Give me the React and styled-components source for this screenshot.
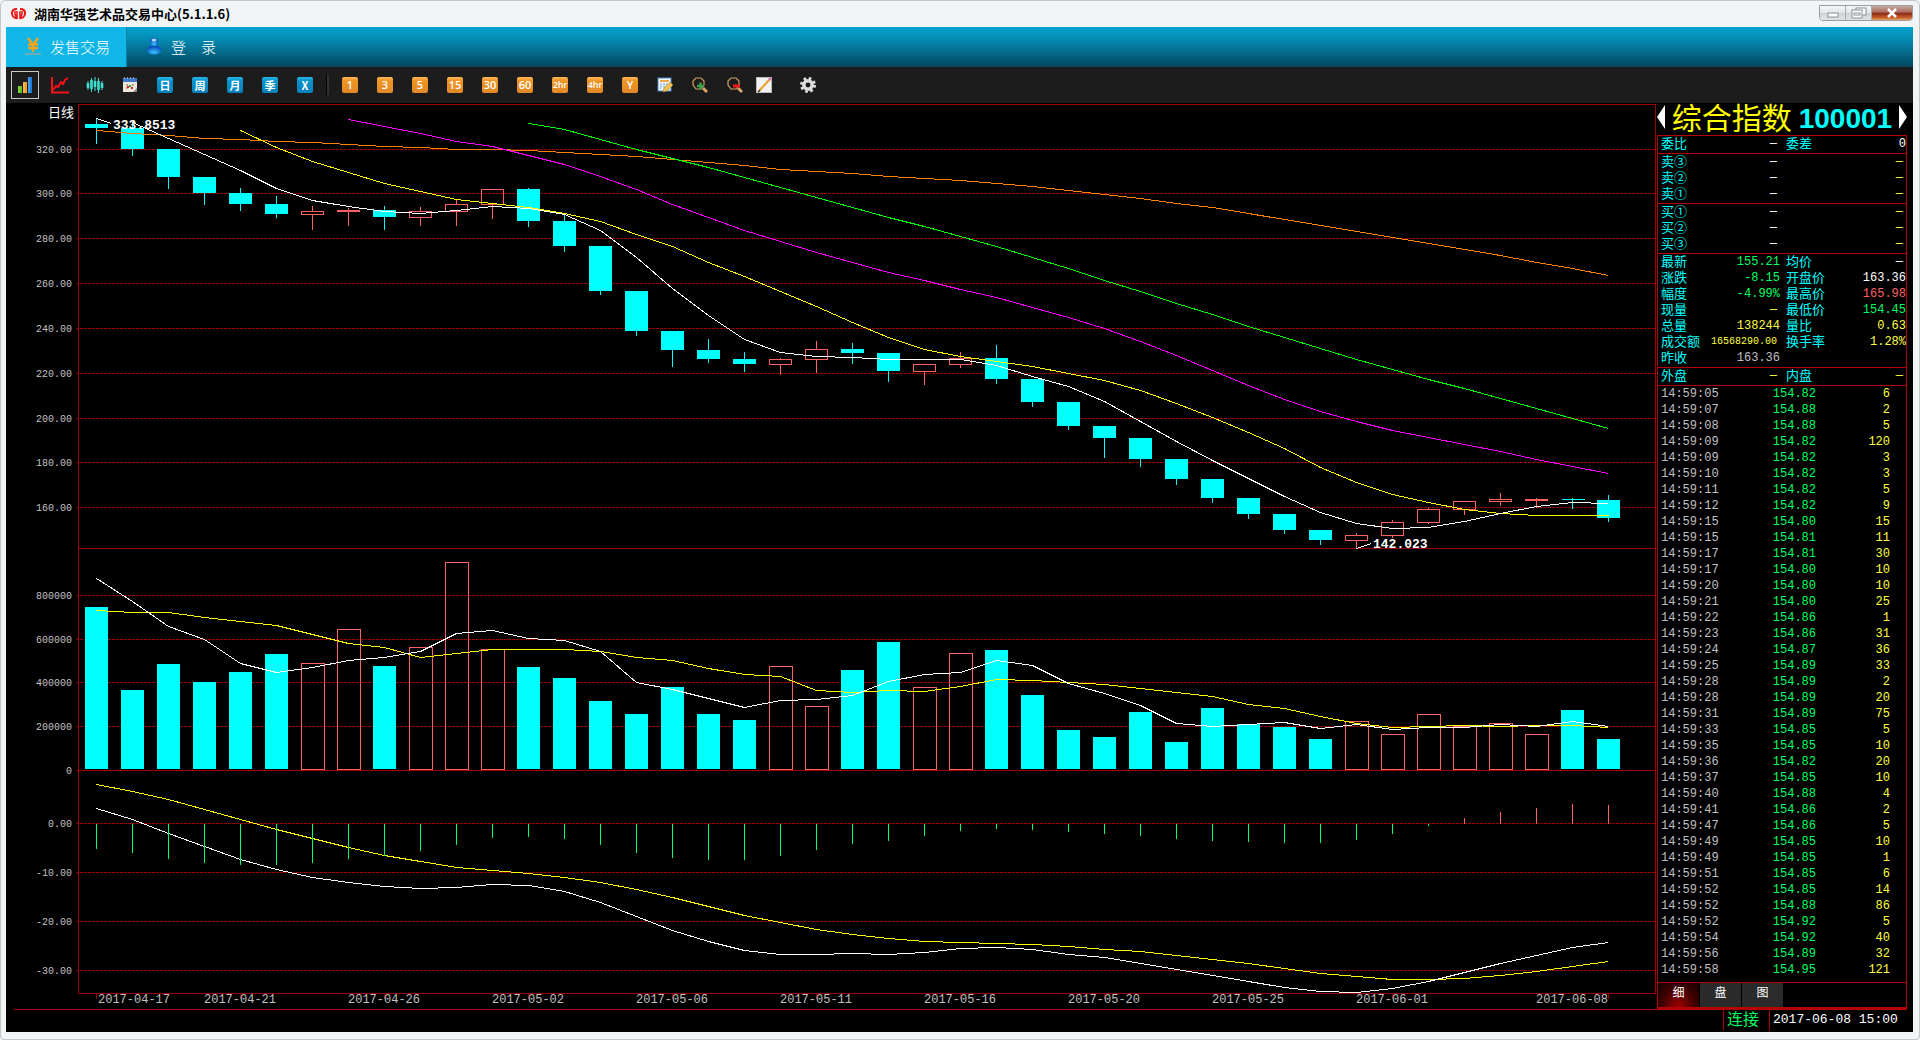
import React, { useState } from 'react';
import styled, { createGlobalStyle, css } from 'styled-components';

const SANS = `'Noto Sans CJK SC', 'Liberation Sans', sans-serif`;
const SIDE = `'Liberation Sans', 'Noto Sans CJK SC', sans-serif`;
const MONO = `'Liberation Mono', 'Noto Sans CJK SC', monospace`;

const colors = {
  down: '#00ffff',
  up: '#ff6060',
  grid: '#a00000',
  border: '#b40000',
  green: '#00ff60',
  yellow: '#ffff40',
  white: '#ffffff',
  grey: '#c0c0c0',
  label: '#00ffff',
};

const GlobalStyle = createGlobalStyle`
  * {
    box-sizing: border-box;
  }
  body {
    margin: 0;
    background: #f0f3f4;
    font-family: ${SANS};
  }
  button {
    font: inherit;
    color: inherit;
    border: 0;
    padding: 0;
    background: none;
    cursor: pointer;
  }
`

/* ---------- window frame ---------- */

const StyledWindow = styled.div`
  min-height: 100vh;
  display: flex;
  flex-direction: column;
  padding: 0 6px 7px 5px;
  background: #f2f5f6;
  border: 1px solid #c4c6c8;
  border-radius: 6px 6px 4px 4px;
`
const StyledTitleBar = styled.header`
  display: flex;
  align-items: center;
  height: 26px;
  padding-left: 5px;
`
const StyledTitle = styled.h1`
  flex: 1;
  margin: 0 0 0 8px;
  font-size: 13px;
  line-height: 26px;
  font-weight: 700;
  color: #000;
`
const StyledWinButtons = styled.div`
  display: flex;
  align-self: flex-start;
  height: 16px;
  margin-top: 4px;
  border: 1px solid #9a9ea2;
  border-radius: 0 0 4px 4px;
  overflow: hidden;
`
const StyledWinButton = styled.button`
  display: flex;
  align-items: center;
  justify-content: center;
  width: ${props => props.$close ? '40px' : '26px'};
  border-right: ${props => props.$close ? '0' : '1px solid #a9adb1'};
  background: ${props => props.$close
    ? 'linear-gradient(#c5a9a2, #ad6a5c 45%, #8a2612 50%, #c8622c 85%, #e8a860)'
    : 'linear-gradient(#f4f6f7, #e3e6e9 48%, #cdd3d7 52%, #dde3e6)'};
`
const StyledBody = styled.div`
  flex: 1;
  display: flex;
  flex-direction: column;
  background: #000;
`

/* ---------- menu and toolbar ---------- */

const StyledMenu = styled.nav`
  display: flex;
  height: 40px;
  background: linear-gradient(#05a4d1, #0587ad 35%, #045f7c 75%, #04465f);
`
const StyledMenuItem = styled.button`
  display: flex;
  align-items: center;
  gap: 9px;
  padding: 0 16px 2px 19px;
  font-size: 15px;
  font-weight: 300;
  color: #fff;
  ${props => props.$active && css`
    background: #10b6e6;
    border-right: 1px solid #0a7fa6;
  `}
`
const StyledToolbar = styled.div`
  display: flex;
  align-items: center;
  gap: 7px;
  height: 36px;
  padding-left: 5px;
  background: #1c1c1c;
`
const StyledTool = styled.button`
  display: flex;
  align-items: center;
  justify-content: center;
  width: ${props => props.$narrow ? '16px' : '28px'};
  height: 28px;
  border: ${props => props.$active ? '1px solid #c8c8c8' : '0'};
  margin-left: ${props => props.$spaced ? '15px' : '0'};
`
const StyledSeparator = styled.span`
  width: 3px;
  height: 20px;
  border-left: 1px solid #000;
  border-right: 2px solid #333;
`
const StyledBadge = styled.span`
  width: 16px;
  height: 16px;
  border-radius: 2px;
  font-family: ${props => props.$orange ? `'Open Sans', sans-serif` : SANS};
  font-size: ${props => props.$small ? '9px' : '11px'};
  line-height: 16px;
  font-weight: 600;
  text-align: center;
  white-space: nowrap;
  color: #fff;
  background: ${props => props.$orange
    ? 'linear-gradient(#ffb65c, #ee9420 25%, #e0892a)'
    : 'linear-gradient(#2bb7e8, #0792cc 25%, #0780b8)'};
`

/* ---------- main area ---------- */

const StyledMain = styled.main`
  display: flex;
  align-items: stretch;
  padding-right: 6px;
`
const StyledChartArea = styled.section`
  flex: 1;
  min-width: 0;
`
const StyledChart = styled.svg`
  display: block;
  width: 100%;
  height: auto;
  font-family: ${MONO};
`
const StyledSide = styled.aside`
  display: flex;
  flex-direction: column;
  width: 250px;
  font-family: ${SIDE};
  color: ${colors.label};
`
const StyledSideHeader = styled.div`
  display: flex;
  align-items: center;
  justify-content: space-between;
  height: 32px;
`
const StyledIndexName = styled.h2`
  margin: 0;
  font-size: 30px;
  line-height: 32px;
  font-weight: 400;
  color: #ffff00;
`
const StyledIndexCode = styled.span`
  font-size: 28px;
  line-height: 32px;
  font-weight: 700;
  color: ${colors.label};
`
const StyledPanel = styled.div`
  flex: 1;
  display: flex;
  flex-direction: column;
  border: 1px solid ${colors.border};
  border-bottom-width: 2px;
`
const StyledSection = styled.div`
  padding-bottom: 1px;
  border-bottom: 1px solid ${colors.border};
`
const StyledQuoteRow = styled.div`
  display: grid;
  grid-template-columns: 122px 1fr;
  column-gap: 6px;
  line-height: 16px;
`
const StyledQuote = styled.div`
  display: flex;
  justify-content: space-between;
  padding-left: ${props => props.$first ? '3px' : '0'};
`
const StyledLabel = styled.span`
  font-size: 13px;
  white-space: nowrap;
`
const StyledValue = styled.span`
  font-family: ${MONO};
  font-size: ${props => props.$compact ? '10px' : '12px'};
  padding-right: ${props => props.$inset ? '3px' : '0'};
  white-space: nowrap;
  color: ${props => colors[props.$tone] || colors.white};
`
const StyledTicks = styled.table`
  width: 100%;
  border-collapse: collapse;
  font-family: ${MONO};
  font-size: 12px;
  line-height: 16px;
  td {
    padding: 0;
    text-align: right;
  }
  td:first-child {
    padding-left: 3px;
    text-align: left;
    color: ${colors.grey};
  }
  td:nth-child(2) {
    width: 80px;
    color: ${colors.green};
  }
  td:last-child {
    width: 90px;
    padding-right: 16px;
    color: ${colors.yellow};
  }
`
const StyledTabs = styled.div`
  display: flex;
  gap: 1px;
  height: 25px;
  margin-top: auto;
  border-top: 1px solid ${colors.border};
`
const StyledTab = styled.button`
  width: 41px;
  font-size: 12px;
  line-height: 20px;
  padding-bottom: 4px;
  color: #fff;
  background: ${props => props.$active
    ? 'radial-gradient(ellipse at 50% 100%, #a00000, #400000 55%, #140000)'
    : '#2b2b2b'};
`
const StyledStatus = styled.footer`
  display: flex;
  justify-content: flex-end;
  margin: 0 6px 0 8px;
  border-top: 1px solid ${colors.border};
`
const StyledStatusCell = styled.span`
  height: 20px;
  padding: 0 3px;
  border-left: 1px solid ${colors.border};
  font-family: ${props => props.$mono ? MONO : SIDE};
  font-size: ${props => props.$mono ? '13px' : '16px'};
  line-height: 20px;
  width: ${props => props.$mono ? '138px' : '46px'};
  white-space: nowrap;
  color: ${props => props.$mono ? colors.white : colors.green};
`

/* ---------- data ---------- */

// high, body top, body bottom, low, direction (1 = up)
const candles = [
  [118, 124, 128, 143, 0], [122, 128, 149, 155, 0], [149, 149, 177, 188, 0], [177, 177, 193, 204, 0],
  [187, 193, 204, 210, 0], [195, 204, 214, 217, 0], [205, 211, 215, 229, 1], [207, 210, 212, 225, 1],
  [205, 210, 217, 229, 0], [206, 211, 218, 225, 1], [199, 204, 212, 225, 1], [188, 189, 205, 218, 1],
  [187, 189, 221, 226, 0], [214, 221, 246, 251, 0], [246, 246, 291, 294, 0], [290, 291, 331, 335, 0],
  [331, 331, 350, 366, 0], [338, 350, 359, 362, 0], [351, 359, 364, 371, 0], [357, 359, 365, 374, 1],
  [340, 349, 360, 372, 1], [342, 349, 353, 363, 0], [352, 353, 371, 381, 0], [364, 364, 372, 384, 1],
  [351, 358, 365, 367, 1], [344, 358, 379, 383, 0], [379, 379, 402, 406, 0], [402, 402, 426, 429, 0],
  [426, 426, 438, 457, 0], [438, 438, 459, 466, 0], [459, 459, 479, 484, 0], [479, 479, 498, 502, 0],
  [497, 498, 514, 518, 0], [513, 514, 530, 533, 0], [530, 530, 540, 544, 0], [532, 535, 541, 548, 1],
  [519, 522, 536, 537, 1], [507, 509, 523, 523, 1], [501, 501, 510, 514, 1], [492, 499, 502, 505, 1],
  [497, 499, 501, 507, 1], [497, 499, 500, 508, 0], [494, 500, 518, 521, 0],
];

const volumes = [
  607, 690, 664, 682, 672, 654, 663, 629, 666, 647, 562, 649, 667, 678, 701, 714, 687, 714, 720, 666, 706, 670,
  642, 687, 653, 650, 695, 730, 737, 712, 742, 708, 724, 727, 739, 721, 734, 714, 726, 723, 734, 710, 739,
];

const macd = [
  848, 852, 858, 862, 864, 864, 862, 858, 855, 850, 844, 837, 836, 838, 844, 852, 857, 859, 859, 855, 849, 843,
  840, 835, 830, 828, 829, 831, 833, 835, 838, 840, 841, 842, 842, 839, 833, 825, 817, 811, 807, 803, 804,
];

// each curve starts at its own candle
const curves = [
  { color: '#ff8000', from: 0, ys: [130, 133, 135, 138, 139, 141, 142, 144, 146, 147, 149, 149, 150, 152, 154, 156, 159, 162, 165, 169, 171, 173, 176, 178, 180, 183, 186, 190, 194, 198, 203, 207, 213, 219, 225, 231, 237, 243, 249, 255, 262, 268, 275] },
  { color: '#00ff00', from: 12, ys: [123, 129, 139, 149, 158, 167, 177, 187, 197, 207, 217, 226, 236, 246, 257, 268, 280, 291, 303, 314, 326, 337, 348, 359, 369, 379, 388, 398, 408, 418, 428] },
  { color: '#ff00ff', from: 7, ys: [119, 126, 133, 141, 146, 155, 164, 176, 189, 204, 217, 230, 241, 252, 262, 272, 280, 289, 297, 307, 317, 328, 341, 355, 370, 385, 399, 411, 421, 430, 437, 444, 451, 459, 466, 473] },
  { color: '#ffff00', from: 4, ys: [130, 147, 161, 172, 183, 191, 199, 203, 207, 213, 221, 234, 246, 262, 276, 291, 306, 322, 337, 349, 356, 361, 366, 373, 380, 390, 403, 417, 432, 448, 467, 482, 494, 502, 509, 513, 515, 515, 515] },
  { color: '#ffffff', from: 1, ys: [122, 138, 154, 170, 188, 200, 206, 211, 213, 210, 206, 208, 214, 230, 257, 288, 315, 339, 352, 356, 357, 359, 359, 359, 365, 376, 386, 401, 421, 441, 460, 478, 496, 512, 523, 528, 527, 521, 513, 506, 502, 503] },
  { color: '#ffff00', from: 0, ys: [610, 612, 612, 617, 621, 625, 634, 643, 647, 657, 653, 649, 649, 649, 651, 657, 660, 668, 674, 676, 690, 692, 690, 691, 686, 679, 680, 682, 684, 688, 692, 696, 704, 708, 716, 723, 727, 726, 725, 726, 725, 725, 727] },
  { color: '#ffffff', from: 0, ys: [578, 601, 626, 639, 663, 672, 667, 660, 657, 651, 633, 630, 638, 640, 651, 682, 689, 698, 707, 700, 699, 695, 681, 674, 672, 660, 665, 683, 693, 705, 723, 726, 724, 722, 728, 724, 729, 727, 727, 724, 726, 721, 726] },
  { color: '#ffff00', from: 0, ys: [784, 791, 799, 809, 819, 829, 838, 847, 855, 861, 867, 870, 873, 877, 882, 889, 897, 906, 915, 922, 929, 934, 938, 941, 942, 943, 944, 946, 949, 951, 955, 959, 963, 968, 973, 976, 979, 979, 978, 975, 971, 966, 961] },
  { color: '#ffffff', from: 0, ys: [808, 819, 833, 846, 859, 869, 877, 882, 886, 888, 887, 884, 885, 891, 902, 916, 930, 941, 950, 954, 954, 953, 954, 952, 948, 947, 949, 954, 957, 963, 969, 975, 981, 987, 991, 992, 988, 981, 972, 963, 955, 947, 942] },
];

const gridLines = [
  [149, '320.00'], [193, '300.00'], [238, '280.00'], [283, '260.00'], [328, '240.00'], [373, '220.00'],
  [418, '200.00'], [462, '180.00'], [507, '160.00'],
  [595, '800000'], [639, '600000'], [682, '400000'], [726, '200000'],
  [823, '0.00'], [872, '-10.00'], [921, '-20.00'], [970, '-30.00'],
];

const dates = [
  [0, '2017-04-17', 'start'], [4, '2017-04-21'], [8, '2017-04-26'], [12, '2017-05-02'], [16, '2017-05-06'],
  [20, '2017-05-11'], [24, '2017-05-16'], [28, '2017-05-20'], [32, '2017-05-25'], [36, '2017-06-01'],
  [42, '2017-06-08', 'end'],
];

const quotes = [
  ['最新', '155.21', 'green', '均价', '—', 'white'],
  ['涨跌', '-8.15', 'green', '开盘价', '163.36', 'white'],
  ['幅度', '-4.99%', 'green', '最高价', '165.98', 'up'],
  ['现量', '—', 'yellow', '最低价', '154.45', 'green'],
  ['总量', '138244', 'yellow', '量比', '0.63', 'yellow'],
  ['成交额', '16568290.00', 'yellow', '换手率', '1.28%', 'yellow'],
  ['昨收', '163.36', 'grey'],
];

const ticks = [
  ['14:59:05', '154.82', 6], ['14:59:07', '154.88', 2], ['14:59:08', '154.88', 5], ['14:59:09', '154.82', 120],
  ['14:59:09', '154.82', 3], ['14:59:10', '154.82', 3], ['14:59:11', '154.82', 5], ['14:59:12', '154.82', 9],
  ['14:59:15', '154.80', 15], ['14:59:15', '154.81', 11], ['14:59:17', '154.81', 30], ['14:59:17', '154.80', 10],
  ['14:59:20', '154.80', 10], ['14:59:21', '154.80', 25], ['14:59:22', '154.86', 1], ['14:59:23', '154.86', 31],
  ['14:59:24', '154.87', 36], ['14:59:25', '154.89', 33], ['14:59:28', '154.89', 2], ['14:59:28', '154.89', 20],
  ['14:59:31', '154.89', 75], ['14:59:33', '154.85', 5], ['14:59:35', '154.85', 10], ['14:59:36', '154.82', 20],
  ['14:59:37', '154.85', 10], ['14:59:40', '154.88', 4], ['14:59:41', '154.86', 2], ['14:59:47', '154.86', 5],
  ['14:59:49', '154.85', 10], ['14:59:49', '154.85', 1], ['14:59:51', '154.85', 6], ['14:59:52', '154.85', 14],
  ['14:59:52', '154.88', 86], ['14:59:52', '154.92', 5], ['14:59:54', '154.92', 40], ['14:59:56', '154.89', 32],
  ['14:59:58', '154.95', 121],
];

/* ---------- icons ---------- */

const LogoIcon = () => (
  <svg width="15" height="12" viewBox="0 0 15 12" fill="none" stroke="#f01010" strokeWidth="2">
    <path d="M6 1 C2 1 1 3 1 5 C1 8 3 10 5 10 M9 1 C13 1 14 3 14 5 C14 8 12 10 10 10" />
    <path d="M4 3 V6 L6 11 V3 M11 3 V6 L9 11 V3" strokeWidth="1.5" />
  </svg>
);

const YenIcon = () => (
  <svg width="16" height="18" viewBox="0 0 16 18">
    <path d="M3 1 L8 8 L13 1 M3 7.500 H13 M3 11 H13 M8 8 V15" fill="none" stroke="#f5a51c" strokeWidth="2.500" />
    <path d="M0 17 H16" stroke="#c9a486" strokeWidth="1" />
  </svg>
);

const UserIcon = () => (
  <svg width="16" height="18" viewBox="0 0 16 18">
    <defs>
      <radialGradient id="user" cx="50%" cy="75%" r="60%">
        <stop offset="0" stopColor="#3cc4ff" />
        <stop offset="1" stopColor="#0a50bc" />
      </radialGradient>
    </defs>
    <ellipse cx="8" cy="13" rx="7.500" ry="4.500" fill="url(#user)" />
    <circle cx="8" cy="5" r="4" fill="url(#user)" />
    <ellipse cx="8" cy="3" rx="2.500" ry="1.500" fill="#a8d8ff" />
  </svg>
);

const BarsIcon = () => (
  <svg width="16" height="16" viewBox="0 0 16 16">
    <rect x="1" y="9" width="4" height="7" fill="#5cc518" />
    <rect x="6" y="5" width="4" height="11" fill="#f2a028" />
    <rect x="11" y="0" width="4" height="16" fill="#1b7fe0" />
    <path d="M2 9 V16 M7 5 V16 M12 0 V16" stroke="#fff" strokeOpacity="0.4" />
  </svg>
);

const TrendIcon = () => (
  <svg width="18" height="17" viewBox="0 0 18 17" fill="none" stroke="#f8101c">
    <path d="M1 0 V15.500 H18" strokeWidth="2" />
    <path d="M2 13 L5 9 L7 10 L10 5 L12 7 L14 3 L17 1" strokeWidth="2" />
  </svg>
);

const CandlesIcon = () => (
  <svg width="18" height="16" viewBox="0 0 18 16" stroke="#3fe0d0">
    <path d="M2 4 V13 M5.500 1 V15 M9 0 V14 M12.500 1 V16 M16 4 V13" strokeWidth="1" />
    <path d="M2 6 V11 M5.500 3 V12 M9 4 V10 M12.500 4 V13 M16 6 V11" strokeWidth="2.600" />
  </svg>
);

const CalendarIcon = () => (
  <svg width="16" height="16" viewBox="0 0 16 16">
    <rect x="1" y="1" width="14" height="14" fill="#eee6dc" />
    <rect x="1" y="1" width="14" height="4" fill="#3c76c4" />
    <path d="M2 1 H14" stroke="#fff" strokeDasharray="1 2" />
    <path d="M4 8 H6 M10 8 H12 M4 11 H6" stroke="#b8a898" strokeWidth="2" />
    <rect x="7" y="8" width="2" height="2" fill="#3a9a40" />
    <path d="M5 10 H7 M9 11 H11" stroke="#d02818" strokeWidth="2" />
    <path d="M15 11 V15 H11 Z" fill="#988878" />
  </svg>
);

const TableEditIcon = () => (
  <svg width="16" height="16" viewBox="0 0 16 16">
    <rect x="1" y="1" width="13" height="13" fill="#f4f8ff" stroke="#4a86cc" />
    <rect x="3" y="3" width="9" height="2" fill="#f0a848" />
    <path d="M3 7 H12 M3 9 H12 M3 11 H9" stroke="#74a4dc" strokeDasharray="2 1" />
    <path d="M6 15 L7 11 L13 5 L16 8 L10 14 Z" fill="#f0c050" stroke="#a87820" strokeWidth="0.500" />
  </svg>
);

const ZoomIcon = ({ out }) => (
  <svg width="16" height="16" viewBox="0 0 16 16">
    <path d="M11 11 L15 15" stroke="#d8a468" strokeWidth="3" />
    <path d="M4 1 H9 L12 4 V8 L9 12 H4 L1 8 V4 Z" fill="none" stroke="#d0a060" strokeWidth="1.200" />
    {out
      ? <path d="M6 9 H13" stroke="#f01818" strokeWidth="3" />
      : <path d="M5 9 H12 M8.500 5.500 V12.500" stroke="#38a048" strokeWidth="2.500" />}
  </svg>
);

const PencilIcon = () => (
  <svg width="16" height="16" viewBox="0 0 16 16">
    <rect x="0.500" y="0.500" width="15" height="15" fill="#f2f2f2" stroke="#b8b8b8" />
    <path d="M3 14 L14 2" stroke="#e8a028" strokeWidth="2" />
    <path d="M2 15 L4 13" stroke="#333" strokeWidth="1.500" />
    <path d="M13 3 L15 1" stroke="#d070c0" strokeWidth="2" />
  </svg>
);

const GearIcon = () => (
  <svg width="16" height="16" viewBox="0 0 16 16">
    <circle cx="8" cy="8" r="6.500" fill="none" stroke="#e0e0e0" strokeWidth="3" strokeDasharray="2.550 2.550" />
    <circle cx="8" cy="8" r="4.200" fill="none" stroke="#dcdcdc" strokeWidth="3.500" />
  </svg>
);

const ArrowIcon = ({ right }) => (
  <svg width="8" height="24" viewBox="0 0 8 24">
    <path d={right ? 'M0 0 L8 12 L0 24 Z' : 'M8 0 L0 12 L8 24 Z'} fill="#fff" />
  </svg>
);

/* ---------- parts ---------- */

const tools = [
  { name: '分时', icon: <BarsIcon /> },
  { name: '走势', icon: <TrendIcon /> },
  { name: 'K线', icon: <CandlesIcon /> },
  { name: '日历', icon: <CalendarIcon /> },
];
const periods = ['日', '周', '月', '季', 'X'];
const minutes = ['1', '3', '5', '15', '30', '60', '2hr', '4hr', 'Y'];

function Toolbar() {
  const [active, setActive] = useState(0);

  return (
    <StyledToolbar>
      {tools.map((tool, i) => (
        <StyledTool key={tool.name} aria-label={tool.name} $active={active === i} onClick={() => setActive(i)}>
          {tool.icon}
        </StyledTool>
      ))}
      {periods.map(p => <StyledTool key={p}><StyledBadge>{p}</StyledBadge></StyledTool>)}
      <StyledSeparator />
      {minutes.map(m => (
        <StyledTool key={m}><StyledBadge $orange $small={m.length > 2}>{m}</StyledBadge></StyledTool>
      ))}
      <StyledTool aria-label="编辑"><TableEditIcon /></StyledTool>
      <StyledTool aria-label="放大"><ZoomIcon /></StyledTool>
      <StyledTool aria-label="缩小"><ZoomIcon out /></StyledTool>
      <StyledTool aria-label="画线" $narrow><PencilIcon /></StyledTool>
      <StyledTool aria-label="设置" $spaced><GearIcon /></StyledTool>
    </StyledToolbar>
  );
}

const STEP = 36;
const FIRST = 96;
const cx = i => FIRST + i * STEP;

function Chart() {
  return (
    <StyledChart viewBox="6 103 1651 906">
      {/* half a pixel keeps the 1px strokes on whole pixels */}
      <g transform="translate(0.5 0.5)" fill="none" shapeRendering="crispEdges">
        <g stroke={colors.grid}>
          {gridLines.map(([y]) => (
            <g key={y}>
              <path d={`M75 ${y} H78`} />
              <path d={`M79 ${y} H1655`} strokeDasharray="3 1" />
            </g>
          ))}
          <path d="M78 104 H1655 V993 H78 Z M78 548 H1655 M75 770 H1655" />
          {dates.map(([i]) => <path key={i} d={`M${cx(i)} 992 V998`} />)}
        </g>
        {candles.map(([high, top, bottom, low, up], i) => {
          const color = up ? colors.up : colors.down;
          return (
            <g key={i} stroke={color}>
              <path d={`M${cx(i)} ${high} V${top} M${cx(i)} ${bottom - 1} V${low}`} />
              {bottom - top > 1
                ? <rect x={cx(i) - 11} y={top} width="22" height={bottom - top - 1} fill={up ? 'none' : color} />
                : <path d={`M${cx(i) - 11} ${top} H${cx(i) + 12}`} />}
              <rect
                x={cx(i) - 11}
                y={volumes[i]}
                width={up ? 23 : 22}
                height={(up ? 769 : 768) - volumes[i]}
                fill={up ? 'none' : color}
              />
            </g>
          );
        })}
        {curves.map((curve, n) => (
          <polyline
            key={n}
            stroke={curve.color}
            points={curve.ys.map((y, i) => `${cx(curve.from + i)},${y}`).join(' ')}
          />
        ))}
        {macd.map((y, i) => (
          <path key={i} d={`M${cx(i)} 823 V${y}`} stroke={y > 823 ? colors.green : colors.up} />
        ))}
        <path d="M96 118 L111 123 M1356 548 L1371 543" stroke="#fff" />
      </g>
      <g fill={colors.grey} fontSize="10" textAnchor="end">
        {gridLines.map(([y, text]) => <text key={y} x="72" y={y + 4}>{text}</text>)}
        <text x="72" y="774">0</text>
      </g>
      <text x="74" y="117" fontSize="13" textAnchor="end" fill="#fff">日线</text>
      <g fill="#fff" fontSize="13" fontWeight="700">
        <text x="113" y="129">333.8513</text>
        <text x="1373" y="548">142.023</text>
      </g>
      <g fill={colors.grey} fontSize="12">
        {dates.map(([i, text, anchor]) => (
          <text
            key={text}
            x={cx(i) + (anchor === 'start' ? 2 : 0)}
            y="1003"
            textAnchor={anchor || 'middle'}
          >
            {text}
          </text>
        ))}
      </g>
    </StyledChart>
  );
}

function QuoteRow({ row }) {
  const [label, value, tone, label2, value2, tone2] = row;

  return (
    <StyledQuoteRow>
      <StyledQuote $first>
        <StyledLabel>{label}</StyledLabel>
        <StyledValue $tone={tone} $compact={value.length > 8} $inset={value === '—' || value.length > 8}>
          {value}
        </StyledValue>
      </StyledQuote>
      {(label2 !== undefined) && (
        <StyledQuote>
          <StyledLabel>{label2}</StyledLabel>
          <StyledValue $tone={tone2} $inset={value2 === '—'}>{value2}</StyledValue>
        </StyledQuote>
      )}
    </StyledQuoteRow>
  );
}

function SidePanel() {
  const [tab, setTab] = useState('细');

  return (
    <StyledSide>
      <StyledSideHeader>
        <button aria-label="上一个"><ArrowIcon /></button>
        <StyledIndexName>综合指数</StyledIndexName>
        <StyledIndexCode>100001</StyledIndexCode>
        <button aria-label="下一个"><ArrowIcon right /></button>
      </StyledSideHeader>
      <StyledPanel>
        <StyledSection>
          <QuoteRow row={['委比', '—', 'white', '委差', '0', 'white']} />
        </StyledSection>
        <StyledSection>
          {['卖③', '卖②', '卖①'].map(s => <QuoteRow key={s} row={[s, '—', 'white', '', '—', 'yellow']} />)}
        </StyledSection>
        <StyledSection>
          {['买①', '买②', '买③'].map(s => <QuoteRow key={s} row={[s, '—', 'white', '', '—', 'yellow']} />)}
        </StyledSection>
        <StyledSection>
          {quotes.map(row => <QuoteRow key={row[0]} row={row} />)}
        </StyledSection>
        <StyledSection>
          <QuoteRow row={['外盘', '—', 'yellow', '内盘', '—', 'yellow']} />
        </StyledSection>
        <StyledTicks>
          <tbody>
            {ticks.map(([time, price, amount], i) => (
              <tr key={i}>
                <td>{time}</td>
                <td>{price}</td>
                <td>{amount}</td>
              </tr>
            ))}
          </tbody>
        </StyledTicks>
        <StyledTabs>
          {['细', '盘', '图'].map(t => (
            <StyledTab key={t} $active={tab === t} onClick={() => setTab(t)}>{t}</StyledTab>
          ))}
        </StyledTabs>
      </StyledPanel>
    </StyledSide>
  );
}

function App() {
  return (
    <StyledWindow>
      <GlobalStyle />
      <StyledTitleBar>
        <LogoIcon />
        <StyledTitle>湖南华强艺术品交易中心(5.1.1.6)</StyledTitle>
        <StyledWinButtons>
          <StyledWinButton aria-label="最小化">
            <svg width="12" height="12" viewBox="0 0 12 12">
              <rect x="1" y="6" width="10" height="4" fill="#fff" stroke="#8c9094" />
            </svg>
          </StyledWinButton>
          <StyledWinButton aria-label="还原">
            <svg width="18" height="12" viewBox="0 0 18 12" fill="#fff" stroke="#8c9094">
              <rect x="6" y="1" width="10" height="7" />
              <rect x="2" y="3" width="10" height="8" />
              <rect x="4" y="6" width="6" height="2" />
            </svg>
          </StyledWinButton>
          <StyledWinButton $close aria-label="关闭">
            <svg width="12" height="10" viewBox="0 0 12 10">
              <path d="M2 1 L10 9 M10 1 L2 9" stroke="#fff" strokeWidth="2.500" />
            </svg>
          </StyledWinButton>
        </StyledWinButtons>
      </StyledTitleBar>
      <StyledBody>
        <StyledMenu>
          <StyledMenuItem $active><YenIcon />发售交易</StyledMenuItem>
          <StyledMenuItem><UserIcon />登　录</StyledMenuItem>
        </StyledMenu>
        <Toolbar />
        <StyledMain>
          <StyledChartArea>
            <Chart />
          </StyledChartArea>
          <SidePanel />
        </StyledMain>
        <StyledStatus>
          <StyledStatusCell>连接</StyledStatusCell>
          <StyledStatusCell $mono>2017-06-08 15:00</StyledStatusCell>
        </StyledStatus>
      </StyledBody>
    </StyledWindow>
  );
}

export default App;
